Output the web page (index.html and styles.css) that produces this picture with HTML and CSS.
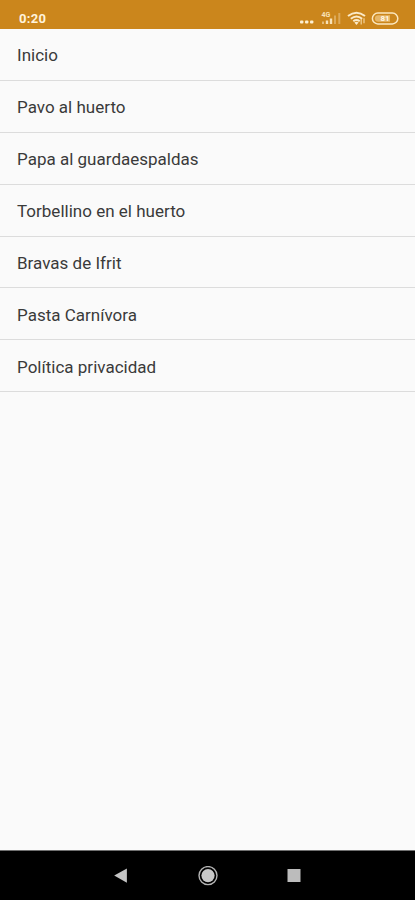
FILE: index.html
```html
<!DOCTYPE html>
<html lang="es">
<head>
    <meta charset="UTF-8">
    <meta name="viewport" content="width=device-width, initial-scale=1.0">
    <title>Recetas</title>
    <link rel="stylesheet" href="styles.css">
</head>

<body>
    <div class="screen">
        <header class="statusBar">
            <span class="clock">0:20</span>
            <svg class="statusIcons" width="102" height="16" viewBox="0 0 102 16">
                <!-- dots -->
                <g fill="#fdf0d2">
                    <rect x="2" y="9.6" width="3.4" height="2.8" rx="1"/>
                    <rect x="7" y="9.6" width="3.4" height="2.8" rx="1"/>
                    <rect x="12" y="9.6" width="3.4" height="2.8" rx="1"/>
                </g>
                <!-- signal -->
                <text class="network" x="23.5" y="6">4G</text>
                <g fill="#f8e2b8">
                    <rect x="24" y="10.5" width="2" height="2.5" opacity=".6"/>
                    <rect x="27.8" y="9.5" width="2.4" height="3.5"/>
                    <rect x="31.8" y="7.5" width="2.4" height="5.5"/>
                    <rect x="36" y="4.5" width="2" height="8.5" opacity=".4"/>
                    <rect x="40.3" y="2" width="2" height="11" opacity=".4"/>
                </g>
                <!-- wifi -->
                <g fill="none" stroke="#fbeac8" stroke-width="2">
                    <path d="M50 5Q58.5 -1.6 67 5"/>
                    <path d="M52.8 7.8Q58.5 3.2 64.2 7.8"/>
                    <path d="M55.3 10.3Q58.5 7.8 61.7 10.3"/>
                </g>
                <path d="M56.4 11.4Q58.5 9.9 60.6 11.4L58.5 14Z" fill="#fbeac8"/>
                <path d="M63.2 8V13.4M66 7.2V12.2" stroke="#f3d39b" stroke-width="1.2"/>
                <!-- battery -->
                <rect x="74.4" y="2.1" width="25.4" height="10.8" rx="5.4" fill="none" stroke="#fbe7be" stroke-width="1.5"/>
                <path d="M80.2 4.2H92V10.8H80.2A3.3 3.3 0 0 1 80.2 4.2Z" fill="#e6b769"/>
                <text class="battery" x="82.4" y="10.4">81</text>
            </svg>
        </header>

        <nav class="menu">
            <a class="item">Inicio</a>
            <a class="item">Pavo al huerto</a>
            <a class="item">Papa al guardaespaldas</a>
            <a class="item">Torbellino en el huerto</a>
            <a class="item">Bravas de Ifrit</a>
            <a class="item">Pasta Carnívora</a>
            <a class="item">Política privacidad</a>
        </nav>

        <footer class="navBar">
            <svg width="20" height="20" viewBox="0 0 20 20">
                <path d="M2.2 9.6L14.9 2.4V16.8Z" fill="#c4c4c4"/>
            </svg>
            <svg width="20" height="20" viewBox="0 0 20 20">
                <circle cx="10" cy="9.6" r="9" fill="none" stroke="#b4b4b4" stroke-width="1.4"/>
                <circle cx="10" cy="9.6" r="6.6" fill="#c8c8c8"/>
            </svg>
            <svg width="20" height="20" viewBox="0 0 20 20">
                <rect x="3.5" y="3" width="13" height="13" fill="#bcbcbc"/>
            </svg>
        </footer>
    </div>
</body>
</html>
```

FILE: styles.css
```css
* {
    margin: 0;
    padding: 0;
    box-sizing: border-box;
}

body {
    font-family: Roboto, "Liberation Sans", sans-serif;
    background-color: #fafafa;
}

.screen {
    height: 900px;
    display: flex;
    flex-direction: column;
    background-color: #fafafa;
}

.statusBar {
    height: 29px;
    flex-shrink: 0;
    display: flex;
    justify-content: space-between;
    align-items: flex-end;
    padding: 0 15px 2px 19px;
    background-color: #cb861c;
}

.clock {
    color: #fff3dc;
    font-size: 13px;
    font-weight: 700;
    line-height: 16px;
    letter-spacing: 0.3px;
}

.statusIcons {
    display: block;
}

.network {
    fill: #f8e2b8;
    font-size: 7px;
    font-weight: 700;
}

.battery {
    fill: #fff8e8;
    font-size: 8px;
    font-weight: 700;
}

.menu {
    flex: 1;
    display: flex;
    flex-direction: column;
}

.item {
    height: 51.9px;
    display: flex;
    align-items: center;
    padding-top: 2px;
    padding-left: 17px;
    border-bottom: 1px solid #dcdcdc;
    color: #3a3a3a;
    font-size: 17px;
    letter-spacing: 0.01px;
}

.navBar {
    height: 50px;
    flex-shrink: 0;
    display: flex;
    justify-content: center;
    align-items: center;
    gap: 66px;
    border-top: 1px solid #707070;
    background-color: #000;
}
```
